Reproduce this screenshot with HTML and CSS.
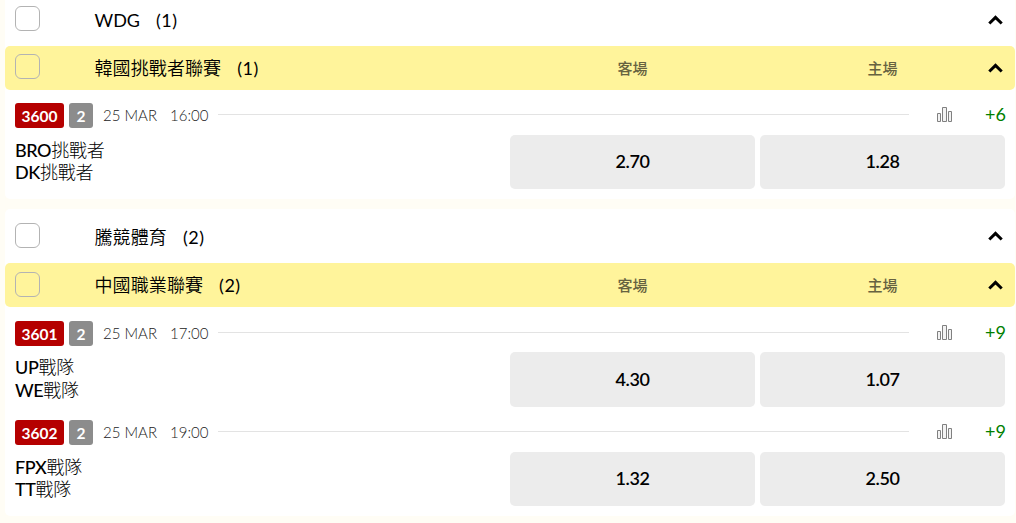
FILE: index.html
```html
<!DOCTYPE html>
<html lang="zh-Hant">
<head>
    <meta charset="UTF-8">
    <meta name="viewport" content="width=device-width, initial-scale=1.0">
    <title>電競賽事</title>
    <link rel="stylesheet" href="styles.css">
</head>
<body>
    <!-- Shared icons -->
    <svg class="icon-defs" width="0" height="0">
        <symbol id="chevron" viewBox="0 0 15 10">
            <path d="M1.3 8.5 L7.5 2.4 L13.7 8.5" fill="none" stroke="#000" stroke-width="3"/>
        </symbol>
        <symbol id="stats" viewBox="0 0 15 15">
            <path d="M.5 6.5h3v8h-3zM5.5 .5h4v14h-4zM11.5 4.5h3v10h-3z" fill="#f2f2f2" stroke="#808080"/>
        </symbol>
    </svg>

    <div class="container">
        <section class="card">
            <div class="group-header">
                <span class="checkbox"></span>
                <div class="title">WDG<span class="count">(1)</span></div>
                <svg class="chevron"><use href="#chevron"/></svg>
            </div>
            <div class="group-header league">
                <span class="checkbox"></span>
                <div class="title"><span class="name">韓國挑戰者聯賽</span><span class="count">(1)</span></div>
                <div class="away">客場</div>
                <div class="home">主場</div>
                <svg class="chevron"><use href="#chevron"/></svg>
            </div>

            <div class="match">
                <div class="match-info">
                    <span class="badge number">3600</span>
                    <span class="badge">2</span>
                    <span class="date">25 MAR</span>
                    <span class="time">16:00</span>
                    <span class="line"></span>
                    <svg class="stats"><use href="#stats"/></svg>
                    <span class="more">+6</span>
                </div>
                <div class="match-odds">
                    <div class="teams">
                        <div>BRO<span>挑戰者</span></div>
                        <div>DK<span>挑戰者</span></div>
                    </div>
                    <button class="odds">2.70</button>
                    <button class="odds">1.28</button>
                </div>
            </div>
        </section>

        <section class="card">
            <div class="group-header">
                <span class="checkbox"></span>
                <div class="title"><span class="name">騰競體育</span><span class="count">(2)</span></div>
                <svg class="chevron"><use href="#chevron"/></svg>
            </div>
            <div class="group-header league">
                <span class="checkbox"></span>
                <div class="title"><span class="name">中國職業聯賽</span><span class="count">(2)</span></div>
                <div class="away">客場</div>
                <div class="home">主場</div>
                <svg class="chevron"><use href="#chevron"/></svg>
            </div>

            <div class="match">
                <div class="match-info">
                    <span class="badge number">3601</span>
                    <span class="badge">2</span>
                    <span class="date">25 MAR</span>
                    <span class="time">17:00</span>
                    <span class="line"></span>
                    <svg class="stats"><use href="#stats"/></svg>
                    <span class="more">+9</span>
                </div>
                <div class="match-odds">
                    <div class="teams">
                        <div>UP<span>戰隊</span></div>
                        <div>WE<span>戰隊</span></div>
                    </div>
                    <button class="odds">4.30</button>
                    <button class="odds">1.07</button>
                </div>
            </div>

            <div class="match">
                <div class="match-info">
                    <span class="badge number">3602</span>
                    <span class="badge">2</span>
                    <span class="date">25 MAR</span>
                    <span class="time">19:00</span>
                    <span class="line"></span>
                    <svg class="stats"><use href="#stats"/></svg>
                    <span class="more">+9</span>
                </div>
                <div class="match-odds">
                    <div class="teams">
                        <div>FPX<span>戰隊</span></div>
                        <div>TT<span>戰隊</span></div>
                    </div>
                    <button class="odds">1.32</button>
                    <button class="odds">2.50</button>
                </div>
            </div>
        </section>
    </div>
</body>
</html>
```
FILE: styles.css
```css
* {
    box-sizing: border-box;
}

body {
    font-family: Lato, "Noto Sans CJK TC", sans-serif;
    font-size: 18px;
    color: #000;
    background-color: #fffdf5;
    margin: 0;
    overflow: hidden;
}

.icon-defs {
    display: none;
}

.container {
    width: 1010px;
    margin: -8px 0 0 5px;
}

.card {
    background-color: #fff;
    border-radius: 5px;
    padding-bottom: 10px;
    margin-bottom: 10px;
}

.group-header {
    display: grid;
    grid-template-columns: 79.5px 415.5px 245px 245px;
    align-items: center;
    height: 54px;
    padding: 0 10px;
}

.league {
    height: 44px;
    background-color: #fff49b;
    border-radius: 5px;
}

.group-header > * {
    grid-row: 1;
}

.checkbox {
    width: 25px;
    height: 25px;
    border: 1px solid #b3b3b3;
    border-radius: 6px;
    margin-bottom: 0.8px;
}

.league .checkbox {
    margin-bottom: 2.6px;
}

.title {
    line-height: 24px;
    font-weight: 400;
    white-space: nowrap;
    padding-top: 1px;
}

.league .title {
    padding-top: 0;
}

.name {
    font-weight: 350;
    letter-spacing: 0.1px;
}

.count {
    margin-left: 16px;
    letter-spacing: 0.5px;
}

.away, .home {
    font-size: 15px;
    font-weight: 500;
    line-height: 20px;
    color: #666240;
    text-align: center;
}

.away {
    grid-column: 3;
}

.home {
    grid-column: 4;
    margin: 0 -5px 0 5px;
}

.chevron {
    grid-column: 4;
    justify-self: end;
    width: 15px;
    height: 10px;
    margin-right: -3px;
}

.card:first-child .group-header:first-child .chevron {
    margin-top: 1px;
}

.league .chevron {
    margin-bottom: 1px;
}

.match {
    height: 99.4px;
    padding: 13.2px 10px 0;
}

.match-info {
    display: flex;
    align-items: center;
    height: 25px;
    margin-bottom: 6.8px;
}

.badge {
    width: 24px;
    height: 25px;
    border-radius: 3px;
    background-color: #8c8c8c;
    color: #fff;
    font-size: 15.5px;
    font-weight: 700;
    line-height: 26px;
    text-align: center;
    margin-right: 10px;
}

.number {
    width: 49px;
    background-color: #b50000;
    margin-right: 5px;
}

.date, .time {
    font-size: 15px;
    font-weight: 300;
    color: #222;
    line-height: 24px;
    white-space: nowrap;
    padding-bottom: 1px;
}

.date {
    width: 67px;
}

.time {
    width: 48px;
}

.line {
    flex: 1;
    height: 1px;
    background-color: #e3e3e3;
    margin-bottom: 2px;
}

.stats {
    width: 15px;
    height: 15px;
    margin: 0 0 2px 28px;
}

.more {
    width: 53px;
    color: #008000;
    line-height: 24px;
    text-align: right;
    padding-bottom: 3px;
    margin-right: -1px;
    margin-left: 1px;
}

.match-odds {
    display: grid;
    grid-template-columns: 490px 245px 245px;
    column-gap: 5px;
    height: 54.4px;
}

.teams {
    font-weight: 500;
    line-height: 22.4px;
    letter-spacing: -0.4px;
    padding-top: 4px;
}

.teams span {
    font-weight: 300;
    letter-spacing: -0.2px;
}

.odds {
    border: none;
    border-radius: 5px;
    background-color: #ececec;
    color: #000;
    font-family: inherit;
    font-size: 18px;
    font-weight: 600;
    letter-spacing: -0.4px;
    padding: 0 0 2px;
    cursor: pointer;
}
```
